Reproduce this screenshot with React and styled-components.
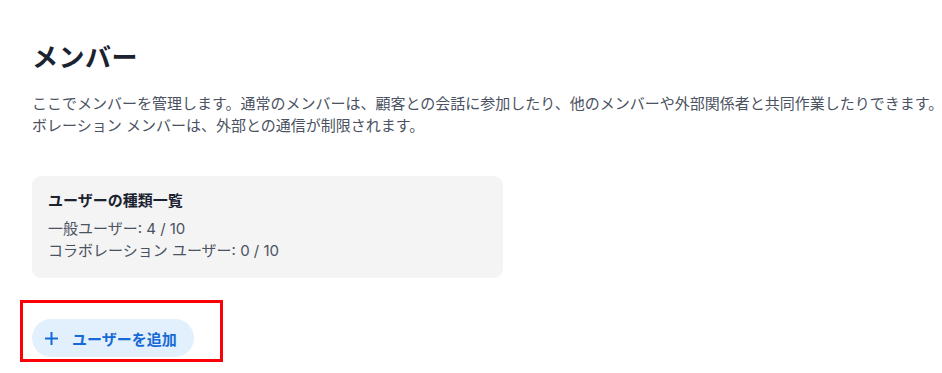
import React from 'react'
import styled, { createGlobalStyle } from 'styled-components'

const GlobalStyle = createGlobalStyle`
  html, body {
    margin: 0;
    min-height: 100%;
    background: #ffffff;
  }
  body {
    overflow: hidden;
    font-family: "Inter", "Noto Sans CJK JP", sans-serif;
  }
`

const Page = styled.main`
  display: flex;
  flex-direction: column;
  align-items: flex-start;
  min-height: 373px;
  box-sizing: border-box;
  padding: 40px 0 24px 32px;
  width: 942px;
  overflow: hidden;
`

const Title = styled.h1`
  margin: 0;
  font-size: 26px;
  line-height: 36px;
  font-weight: 700;
  letter-spacing: 0.5px;
  color: #1b2230;
`

const Lead = styled.p`
  margin: 17px 0 0;
  width: 952px;
  flex-shrink: 0;
  font-size: 15px;
  line-height: 22px;
  color: #4b5262;
`

const Card = styled.section`
  box-sizing: border-box;
  width: 471px;
  margin-top: 39px;
  padding: 14px 16px 16px;
  border-radius: 9px;
  background: #f4f4f4;
`

const CardTitle = styled.h2`
  margin: 0 0 6px;
  font-size: 15px;
  line-height: 22px;
  font-weight: 700;
  color: #1b2230;
`

const Row = styled.div`
  font-size: 15px;
  line-height: 22px;
  color: #4b5262;
`

const Focus = styled.div`
  position: relative;
  margin-top: 41px;

  &::after {
    content: '';
    position: absolute;
    left: -12px;
    top: -19px;
    right: -29px;
    bottom: -5px;
    border: 3px solid #fb0007;
    pointer-events: none;
  }
`

const AddButton = styled.button`
  display: flex;
  align-items: center;
  gap: 13px;
  height: 38px;
  padding: 0 17px 0 12px;
  border: none;
  border-radius: 19px;
  background: #e2f0fd;
  color: #1769d6;
  font-family: inherit;
  font-size: 15px;
  font-weight: 700;
  cursor: pointer;
`

const PlusIcon = () => (
  <svg width="15" height="15" viewBox="0 0 15 15" aria-hidden="true">
    <path d="M7.5 1v13M1 7.5h13" stroke="currentColor" strokeWidth="2" strokeLinecap="butt" />
  </svg>
)

const App = () => {
  return (
    <>
      <GlobalStyle />
      <Page>
        <Title>メンバー</Title>
        <Lead>
          ここでメンバーを管理します。通常のメンバーは、顧客との会話に参加したり、他のメンバーや外部関係者と共同作業したりできます。コラボレーション メンバーは、外部との通信が制限されます。
        </Lead>
        <Card>
          <CardTitle>ユーザーの種類一覧</CardTitle>
          <Row>一般ユーザー: 4 / 10</Row>
          <Row>コラボレーション ユーザー: 0 / 10</Row>
        </Card>
        <Focus>
          <AddButton type="button">
            <PlusIcon />
            ユーザーを追加
          </AddButton>
        </Focus>
      </Page>
    </>
  )
}

export default App
